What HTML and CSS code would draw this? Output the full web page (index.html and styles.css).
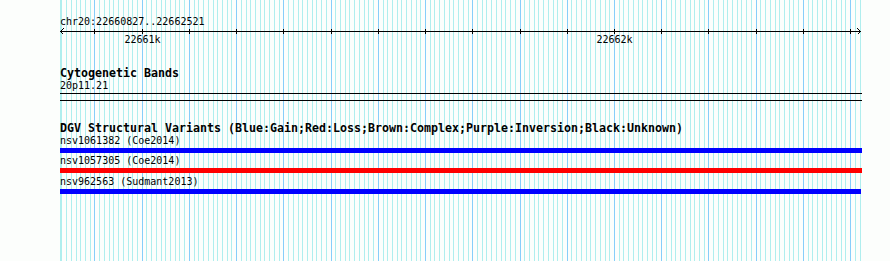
FILE: index.html
```html
<!DOCTYPE html>
<html lang="en">
<head>
    <meta charset="UTF-8">
    <meta name="viewport" content="width=device-width, initial-scale=1.0">
    <title>chr20:22660827..22662521</title>
    <link rel="stylesheet" href="styles.css">
</head>
<body>
    <div class="panel" id="panel" data-start="22660827" data-end="22662521">
        <svg class="grid" id="grid" width="802" height="261"></svg>

        <div class="track ruler">
            <div class="ruler-title">chr20:22660827..22662521</div>
            <svg class="ruler-axis" id="axis" width="802" height="7">
                <line x1="0" y1="3.5" x2="801" y2="3.5"></line>
                <polyline points="3.5,0.5 0.5,3.5 3.5,6.5"></polyline>
                <polyline points="797.5,0.5 800.5,3.5 797.5,6.5"></polyline>
            </svg>
            <div class="ruler-labels" id="labels"></div>
        </div>

        <div class="track">
            <div class="track-title">Cytogenetic Bands</div>
            <div class="feature-label">20p11.21</div>
            <div class="band"></div>
        </div>

        <div class="track">
            <div class="track-title">DGV Structural Variants (Blue:Gain;Red:Loss;Brown:Complex;Purple:Inversion;Black:Unknown)</div>
            <div class="feature">
                <div class="feature-label">nsv1061382 (Coe2014)</div>
                <div class="bar gain"></div>
            </div>
            <div class="feature">
                <div class="feature-label">nsv1057305 (Coe2014)</div>
                <div class="bar loss"></div>
            </div>
            <div class="feature">
                <div class="feature-label">nsv962563 (Sudmant2013)</div>
                <div class="bar gain short"></div>
            </div>
        </div>
    </div>

    <script>
        const panel = document.getElementById('panel');
        const start = Number(panel.dataset.start);
        const end = Number(panel.dataset.end);
        const scale = 800 / (end - start);
        const svgNS = 'http://www.w3.org/2000/svg';

        function xOf(bp) {
            return Math.round((bp - start) * scale);
        }

        // Grid: a line every 10 bp, a darker one every 100 bp
        const grid = document.getElementById('grid');
        const edge = document.createElementNS(svgNS, 'rect');
        edge.setAttribute('x', 0);
        edge.setAttribute('class', 'minor');
        grid.appendChild(edge);

        for (let bp = Math.ceil(start / 10) * 10; bp <= end; bp += 10) {
            const line = document.createElementNS(svgNS, 'rect');
            line.setAttribute('x', xOf(bp));
            line.setAttribute('class', bp % 100 === 0 ? 'major' : 'minor');
            grid.appendChild(line);
        }

        // Ruler ticks every 100 bp, labels every kb
        const axis = document.getElementById('axis');
        const labels = document.getElementById('labels');

        for (let bp = Math.ceil(start / 100) * 100; bp <= end; bp += 100) {
            const x = xOf(bp) + 0.5;
            const tick = document.createElementNS(svgNS, 'line');
            tick.setAttribute('x1', x);
            tick.setAttribute('x2', x);
            tick.setAttribute('y1', 1);
            tick.setAttribute('y2', 6);
            axis.appendChild(tick);

            if (bp % 1000 === 0) {
                const label = document.createElement('span');
                label.className = 'tick-label';
                label.textContent = (bp / 1000) + 'k';
                label.style.left = x + 'px';
                labels.appendChild(label);
            }
        }
    </script>
</body>
</html>
```

FILE: styles.css
```css
* {
    margin: 0;
    padding: 0;
    box-sizing: border-box;
}

body {
    background: #fcfefc;
    font-family: 'DejaVu Sans Mono', 'Liberation Mono', monospace;
    font-size: 10px;
    color: #000;
    overflow: hidden;
}

.panel {
    position: relative;
    width: 802px;
    height: 261px;
    margin-left: 60px;
    padding-top: 16px;
}

.grid {
    position: absolute;
    top: 0;
    left: 0;
}

.grid rect {
    y: 0;
    width: 1px;
    height: 261px;
}

.grid .minor {
    fill: #afeeee;
}

.grid .major {
    fill: #87cefa;
}

.track {
    position: relative;
}

/* Ruler */
.ruler-title {
    height: 12px;
    line-height: 12px;
    white-space: nowrap;
}

.ruler-axis {
    display: block;
}

.ruler-axis line,
.ruler-axis polyline {
    stroke: #000;
    stroke-width: 1;
    fill: none;
    shape-rendering: crispEdges;
}

.ruler-labels {
    position: relative;
    height: 12px;
    line-height: 12px;
    margin-top: -1px;
}

.tick-label {
    position: absolute;
    top: 0;
    transform: translateX(-50%);
    white-space: nowrap;
}

/* Tracks */
.track-title {
    margin-top: 21px;
    height: 13px;
    line-height: 13px;
    font-size: 11.63px;
    font-weight: bold;
    white-space: nowrap;
}

.feature-label {
    height: 12px;
    line-height: 12px;
    white-space: nowrap;
}

.band {
    height: 8px;
    margin-top: 1px;
    border-top: 1px solid #000;
    border-bottom: 1px solid #000;
}

.feature {
    padding-bottom: 2px;
}

.feature:nth-child(3) {
    padding-bottom: 3px;
}

.bar {
    height: 5px;
    margin-top: 1px;
}

.bar.gain {
    background: #0000ff;
}

.bar.loss {
    background: #ff0000;
}

.bar.short {
    width: 801px;
}
```
